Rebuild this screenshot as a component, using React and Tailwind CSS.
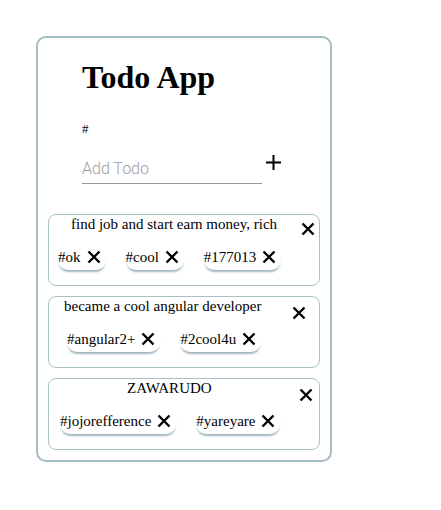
import React from "react";

const todos = [
  {
    text: "find job and start earn money, rich",
    textMl: "ml-[22px]",
    closeCls: "mr-[4px] mt-[7px]",
    chipsMl: "ml-[9px]",
    tags: ["#ok", "#cool", "#177013"],
  },
  {
    text: "became a cool angular developer",
    textMl: "ml-[15px]",
    closeCls: "mr-[13px] mt-[9px]",
    chipsMl: "ml-[18px]",
    tags: ["#angular2+", "#2cool4u"],
  },
  {
    text: "ZAWARUDO",
    textMl: "ml-[78px]",
    closeCls: "mr-[6px] mt-[9px]",
    chipsMl: "ml-[11px]",
    tags: ["#jojorefference", "#yareyare"],
  },
];

function Cross({ className = "" }) {
  return (
    <svg width="14" height="14" viewBox="0 0 14 14" className={className}>
      <path d="M1.5 1.5 L12.5 12.5 M12.5 1.5 L1.5 12.5" stroke="#000" strokeWidth="2.4" fill="none" />
    </svg>
  );
}

function Chip({ label }) {
  return (
    <div className="flex items-center h-[26px] pr-[5px] mr-[20px] rounded-[10px] bg-white shadow-[0_3px_2px_-1px_#9fb7bf]">
      <span className="leading-[26px]">{label}</span>
      <Cross className="ml-[6px] shrink-0" />
    </div>
  );
}

function TodoItem({ todo }) {
  return (
    <div className="h-[72px] border border-[#a9bfc6] rounded-[8px] flex flex-col">
      <div className="flex h-[18px] items-start">
        <span className={`${todo.textMl} leading-[18px] whitespace-nowrap`}>{todo.text}</span>
        <Cross className={`ml-auto shrink-0 ${todo.closeCls}`} />
      </div>
      <div className={`flex mt-[11px] ${todo.chipsMl}`}>
        {todo.tags.map((t) => (
          <Chip key={t} label={t} />
        ))}
      </div>
    </div>
  );
}

export default function App() {
  return (
    <div className="min-h-screen bg-white pt-[36px] pl-[36px] font-['Liberation_Serif',serif] text-[15px] text-black">
      <div className="w-[296px] h-[426px] border-2 border-[#a3bbc3] rounded-[10px] flex flex-col">
        <h1 className="ml-[44px] mt-[21px] text-[32px] leading-[36px] font-bold">Todo App</h1>
        <div className="ml-[44px] mt-[27px] text-[13px] leading-[14px]">#</div>
        <div className="ml-[44px] mt-[21px] flex items-start">
          <input
            placeholder="Add Todo"
            className="w-[180px] h-[27px] pb-[3px] border-b border-[#9a9a9a] outline-none font-['Roboto',sans-serif] font-light text-[16px] placeholder:text-[#9e9e9e]"
          />
          <svg width="15" height="15" viewBox="0 0 15 15" className="ml-[4px] -mt-[2px]">
            <path d="M7.5 0 V15 M0 7.5 H15" stroke="#000" strokeWidth="2" fill="none" />
          </svg>
        </div>
        <div className="mx-[10px] mt-[30px] flex flex-col gap-[10px]">
          {todos.map((t) => (
            <TodoItem key={t.text} todo={t} />
          ))}
        </div>
      </div>
    </div>
  );
}
